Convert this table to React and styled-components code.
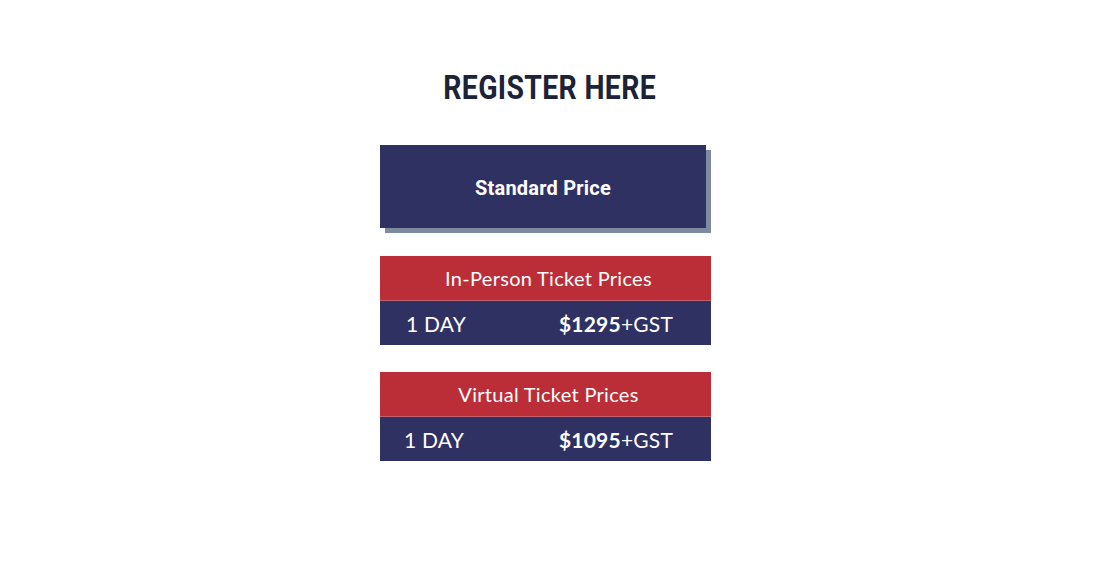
import React from "react"
import { createGlobalStyle, styled } from "styled-components"

const GlobalStyle = createGlobalStyle`
  body {
    margin: 0;
    background: #fff;
    font-family: "Lato", "Liberation Sans", sans-serif;
  }
`

const tickets = [
  { title: "In-Person Ticket Prices", label: "1 DAY", price: "$1295", shift: 2 },
  { title: "Virtual Ticket Prices", label: "1 DAY", price: "$1095", shift: 0 },
]

export default function App() {
  return (
    <>
      <GlobalStyle />
      <Page>
        <Title>REGISTER HERE</Title>
        <Column>
          <StandardBox>Standard Price</StandardBox>
          {tickets.map((t) => (
            <Card key={t.title}>
              <CardHead>{t.title}</CardHead>
              <CardRow $shift={t.shift}>
                <span>{t.label}</span>
                <Price>
                  <strong>{t.price}</strong>+GST
                </Price>
              </CardRow>
            </Card>
          ))}
        </Column>
      </Page>
    </>
  )
}

const Page = styled.div`
  padding-top: 68px;
  display: flex;
  flex-direction: column;
`

const Title = styled.h1`
  margin: 0;
  align-self: center;
  font-family: "Roboto", sans-serif;
  font-weight: 700;
  font-size: 33px;
  line-height: 40px;
  letter-spacing: 0.4px;
  color: #1c2237;
  transform: scaleX(0.86);
`

const Column = styled.div`
  width: 331px;
  margin-left: calc(50% - 170px);
  margin-top: 37px;
  display: flex;
  flex-direction: column;
`

const StandardBox = styled.div`
  width: 326px;
  height: 83px;
  background: #303163;
  box-shadow: 5px 5px 0 #7e8a9e;
  display: flex;
  align-items: center;
  justify-content: center;
  color: #fff;
  font-family: "Roboto", sans-serif;
  font-weight: 700;
  font-size: 20px;
  letter-spacing: 0.2px;
  padding-top: 2px;
  box-sizing: border-box;
`

const Card = styled.div`
  margin-top: 28px;
  &:nth-child(3) {
    margin-top: 27px;
  }
`

const CardHead = styled.div`
  height: 44px;
  background: #bc2e37;
  border-bottom: 1px solid #c0606a;
  display: flex;
  align-items: center;
  justify-content: center;
  padding-left: 6px;
  color: #fff;
  font-size: 20px;
  font-weight: 400;
  letter-spacing: 0.3px;
`

const CardRow = styled.div`
  height: 44px;
  background: #303163;
  display: flex;
  align-items: center;
  justify-content: space-between;
  padding: 0 38px 0 ${(p) => 24 + p.$shift}px;
  color: #fff;
  font-size: 21px;
  letter-spacing: 0.2px;
`

const Price = styled.span`
  font-weight: 400;
  strong {
    font-weight: 700;
  }
`
